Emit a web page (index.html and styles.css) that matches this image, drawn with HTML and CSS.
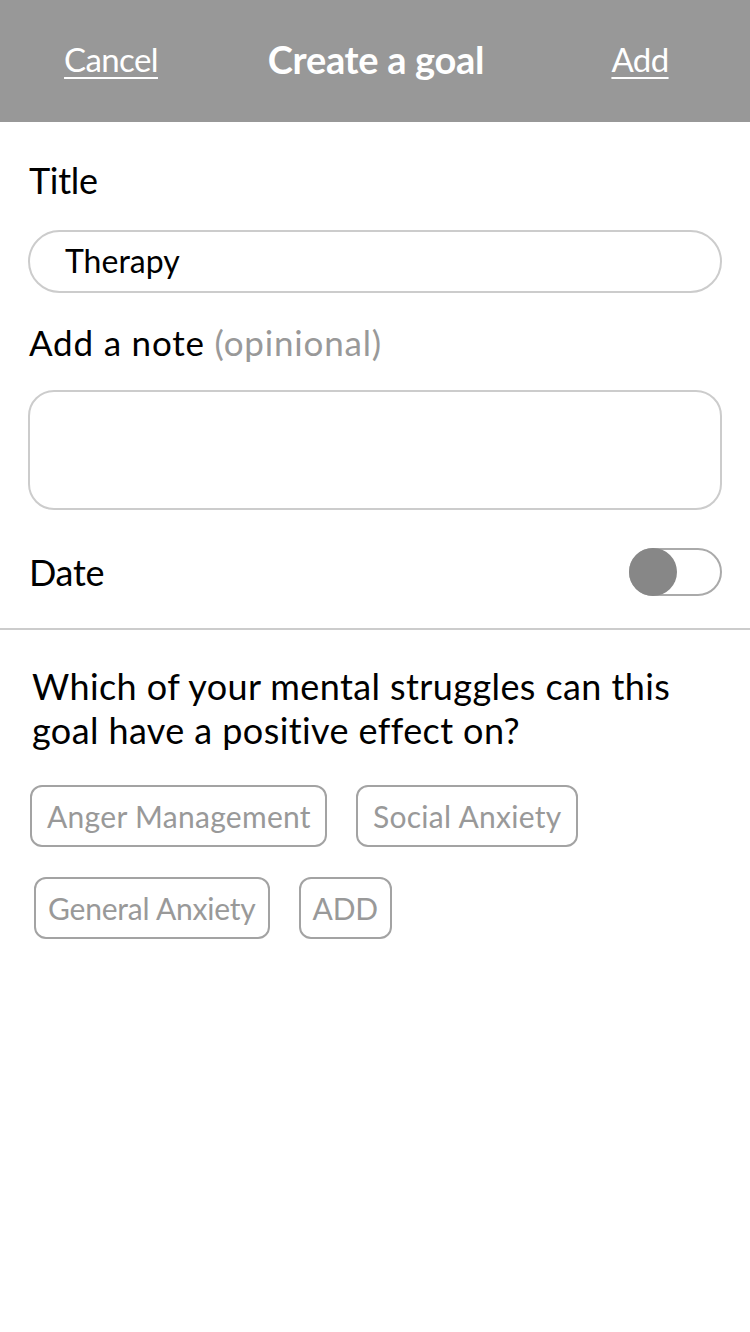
FILE: index.html
```html
<!DOCTYPE html>
<html lang="en">
<head>
<meta charset="utf-8">
<title>Create a goal</title>
<link rel="stylesheet" href="styles.css">
</head>
<body>
<header class="topbar">
  <a class="bar-link">Cancel</a>
  <h1 class="bar-title">Create a goal</h1>
  <a class="bar-link">Add</a>
</header>
<main class="form">
  <div class="label label-title">Title</div>
  <div class="field field-title">Therapy</div>
  <div class="label label-note">Add a note <span class="muted">(opinional)</span></div>
  <div class="field field-note"></div>
  <div class="date-row">
    <span class="label">Date</span>
    <span class="toggle"><span class="knob"></span></span>
  </div>
</main>
<hr class="divider">
<section class="struggles">
  <p class="question">Which of your mental struggles can this goal have a positive effect on?</p>
  <div class="chips chips-1">
    <span class="chip">Anger Management</span>
    <span class="chip">Social Anxiety</span>
  </div>
  <div class="chips chips-2">
    <span class="chip">General Anxiety</span>
    <span class="chip">ADD</span>
  </div>
</section>
</body>
</html>
```
FILE: styles.css
```css
* { box-sizing: border-box; }
html, body { margin: 0; padding: 0; background: #fff; }
body {
  width: 750px;
  font-family: Lato, "Open Sans", sans-serif;
  color: #000;
}
.topbar {
  height: 122px;
  padding-bottom: 5px;
  background: #989898;
  display: grid;
  grid-template-columns: 222px 1fr 220px;
  align-items: center;
  color: #fff;
}
.bar-link {
  text-align: center;
  font-size: 33px;
  font-weight: 400;
  text-decoration: underline;
  text-decoration-thickness: 2px;
  text-underline-offset: 5px;
  letter-spacing: -0.6px;
}
.bar-title {
  margin: 0;
  text-align: center;
  font-size: 38px;
  font-weight: 700;
  letter-spacing: -0.3px;
}
.form {
  padding: 36px 28px 0 28px;
}
.label {
  font-size: 36px;
  line-height: 44px;
  padding-left: 1px;
  letter-spacing: -0.3px;
}
.label-note {
  margin-top: 27px;
  font-size: 35px;
  letter-spacing: 0.8px;
}
.muted { color: #999; }
.field {
  border: 2px solid #cccccc;
  background: #fff;
}
.field-title {
  margin-top: 28px;
  height: 63px;
  border-radius: 32px;
  padding-left: 35px;
  font-size: 32px;
  line-height: 57px;
}
.field-note {
  margin-top: 26px;
  height: 120px;
  border-radius: 26px;
}
.date-row {
  margin-top: 38px;
  display: flex;
  justify-content: space-between;
  align-items: center;
}
.toggle {
  width: 93px;
  height: 48px;
  border: 2px solid #aaaaaa;
  border-radius: 24px;
  position: relative;
  display: block;
}
.knob {
  position: absolute;
  left: -2px;
  top: -2px;
  width: 48px;
  height: 48px;
  border-radius: 50%;
  background: #878787;
}
.divider {
  margin: 32px 0 0 0;
  border: 0;
  height: 2px;
  background: #cccccc;
}
.struggles { padding: 0 30px; }
.question {
  margin: 34px 0 0 2px;
  font-size: 36px;
  line-height: 44px;
  letter-spacing: 0.4px;
}
.chips {
  display: flex;
  gap: 29px;
}
.chips-1 { margin-top: 33px; }
.chips-2 { margin-top: 30px; padding-left: 4px; }
.chip {
  height: 62px;
  padding: 0 14px 0 15px;
  border: 2px solid #a3a3a3;
  border-radius: 12px;
  color: #999;
  font-size: 30px;
  line-height: 58px;
  letter-spacing: 0.3px;
}
.chips-2 .chip { letter-spacing: -0.2px; padding: 0 12px; }
```
